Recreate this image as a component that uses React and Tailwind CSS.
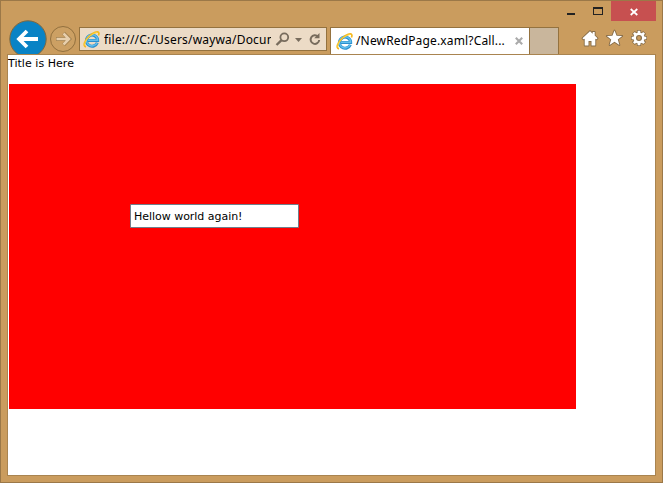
import React from 'react';

function IELogo() {
  return (
    <svg className="block h-[17px] w-[17px] shrink-0" viewBox="0 0 17 17" fill="none">
      <path d="M14.300 11.700A5.600 5.600 0 1 1 14.600 8.800v.7H5" stroke="#2a8fce" strokeWidth="3.100" />
      <path d="M14.100 11.700A5.600 5.600 0 1 1 14.600 8.800v.5H5" stroke="#62bfec" strokeWidth="1.500" />
      <path d="M3 15.900C-.6 15 1.700 9.300 6.300 5 10.300 1.400 14.700.1 15.700 1.600c.5.8.2 1.800-.3 2.900" stroke="#f5b81e" strokeWidth="1.700" />
      <path d="M1.900 14.400C.9 12.500 3.300 8.500 6.800 5.400c2.800-2.500 5.600-3.900 7.400-3.900" stroke="#ffdc4a" strokeWidth=".8" />
    </svg>
  );
}

function WindowControls() {
  return (
    <div className="flex h-5 shrink-0 justify-end pr-[6px]">
      <svg className="block h-5 w-[50px]" viewBox="0 0 50 20" shapeRendering="crispEdges">
        <rect x="6" y="12" width="8" height="2" fill="#222" />
        <path fill="#222" fillRule="evenodd" d="M32 6h10v8H32zm1 2v5h8V8z" />
      </svg>
      <button className="flex h-5 w-[45px] items-center justify-center bg-[#c75050]" aria-label="Close">
        <svg className="mt-[2px] block h-2 w-2" viewBox="0 0 8 8">
          <path d="M.7 1l6.600 6M7.300 1L.7 7" stroke="#fff" strokeWidth="1.700" />
        </svg>
      </button>
    </div>
  );
}

function NavButtons() {
  return (
    <svg className="-mt-[2px] block h-[35px] w-[78px] shrink-0" viewBox="1 19 78 35">
      <circle cx="28" cy="39" r="18.200" fill="#0983c5" stroke="#80683f" />
      <path d="M38 39H20.500M27 31l-8 8 8 8" fill="none" stroke="#fff" strokeWidth="3.800" />
      <circle cx="63" cy="39" r="12.500" fill="#cca063" stroke="#92703e" />
      <path d="M56 39h12.500M63.500 33.200l5.800 5.800-5.800 5.800" fill="none" stroke="#a17f4c" strokeWidth="3.800" />
      <path d="M56.500 39h12M63.500 33.500L69 39l-5.500 5.500" fill="none" stroke="#e7cfac" strokeWidth="2.500" />
    </svg>
  );
}

function AddressBar() {
  return (
    <div className="mt-[6px] flex h-6 w-[248px] shrink-0 items-center border border-[#94723f] bg-[#ecdbc6] pl-[3px]">
      <IELogo />
      <div className="ml-[4px] w-[167px] overflow-hidden whitespace-nowrap pt-px text-[12px] leading-[20px] tracking-[0.190px] text-black">
        file:///C:/Users/waywa/Docum
      </div>
      <svg className="ml-[4px] block h-[22px] w-[50px] shrink-0" viewBox="275 28 50 22" fill="none" stroke="#786c5d">
        <circle cx="284.300" cy="37.300" r="3.900" strokeWidth="1.800" />
        <path d="M281.300 40.300L276.500 45" strokeWidth="2.400" />
        <path d="M295 38h7l-3.500 4z" fill="#786c5d" stroke="none" />
        <path d="M318 36.600A4.300 4.300 0 1 0 319.200 40" strokeWidth="2" />
        <path d="M319.500 33v5.300h-5.300z" fill="#786c5d" stroke="none" />
      </svg>
    </div>
  );
}

function Tabs() {
  return (
    <div className="mt-[6px] ml-[3px] flex h-[27px] shrink-0">
      <div className="flex w-[200px] items-center border border-b-0 border-[#94723f] bg-white pl-[5px]">
        <IELogo />
        <div className="ml-[3px] w-[152px] whitespace-nowrap text-[12px] leading-5 tracking-[0.150px] text-black">
          /NewRedPage.xaml?Call...
        </div>
        <svg className="ml-[7px] block h-2 w-2 shrink-0" viewBox="0 0 8 8">
          <path d="M.8.8l6.400 6.400M7.200.8L.8 7.200" stroke="#aaa" strokeWidth="2.100" />
        </svg>
      </div>
      <div className="w-[29px] border-t border-r border-[#94723f] bg-[#c9b69c]" />
    </div>
  );
}

function GearIcon() {
  return (
    <g transform="translate(639 38)">
      <g stroke="#866d4a" strokeWidth="4.200">
        <path d="M0-8V8M-8 0H8M-5.600-5.600L5.600 5.600M-5.600 5.600L5.600-5.600" />
      </g>
      <circle r="6.300" fill="#866d4a" />
      <path d="M0-7.300V7.300M-7.300 0H7.300M-5.100-5.100L5.100 5.100M-5.100 5.100L5.100-5.100" stroke="#fff" strokeWidth="2.700" />
      <circle r="5.600" fill="#fff" />
      <circle r="3" fill="#866d4a" />
      <circle r="1.900" fill="#ca9c5e" />
    </g>
  );
}

function Tools() {
  return (
    <svg className="ml-[21px] block h-[33px] w-[72px] shrink-0" viewBox="580 21 72 33">
      <g fill="#fff" stroke="#866d4a" strokeWidth="1.800" paintOrder="stroke" strokeLinejoin="round">
        <path d="M590 31.200l2.700 2.500V32h2v3.600l2.800 2.700-1 1-1.200-.5V45.500h-3.800V41h-3v4.500h-3.800v-6.700l-1.200.5-1-1z" />
        <path d="M614.500 30.500l2.100 5.200 5.600.3-4.400 3.400 1.600 5.600-4.900-3.200-4.900 3.200 1.600-5.600-4.400-3.400 5.600-.3z" />
      </g>
      <GearIcon />
    </svg>
  );
}

export default function App() {
  return (
    <div className="flex h-[483px] w-[663px] flex-col overflow-hidden border border-[#9b7848] bg-[#ca9c5e] font-['Noto_Sans','Open_Sans',sans-serif]">
      <WindowControls />
      <header className="flex h-[33px] shrink-0 items-start">
        <NavButtons />
        <AddressBar />
        <Tabs />
        <Tools />
      </header>
      <main className="ml-[6px] h-[422px] w-[649px] shrink-0 border border-[#a98450] bg-white font-['DejaVu_Sans',Verdana,sans-serif] text-[11px] text-black">
        <div className="h-[29px] leading-[17px] tracking-[0.040px]">Title is Here</div>
        <div className="ml-px h-[325px] w-[567px] bg-[#ff0000] pt-[120px] pl-[121px]">
          <div className="h-6 w-[169px] rounded-[1px] border border-[#6f7f8c] bg-white pl-[3px] leading-[23px] tracking-[-0.030px]">
            Hellow world again!
          </div>
        </div>
      </main>
    </div>
  );
}
